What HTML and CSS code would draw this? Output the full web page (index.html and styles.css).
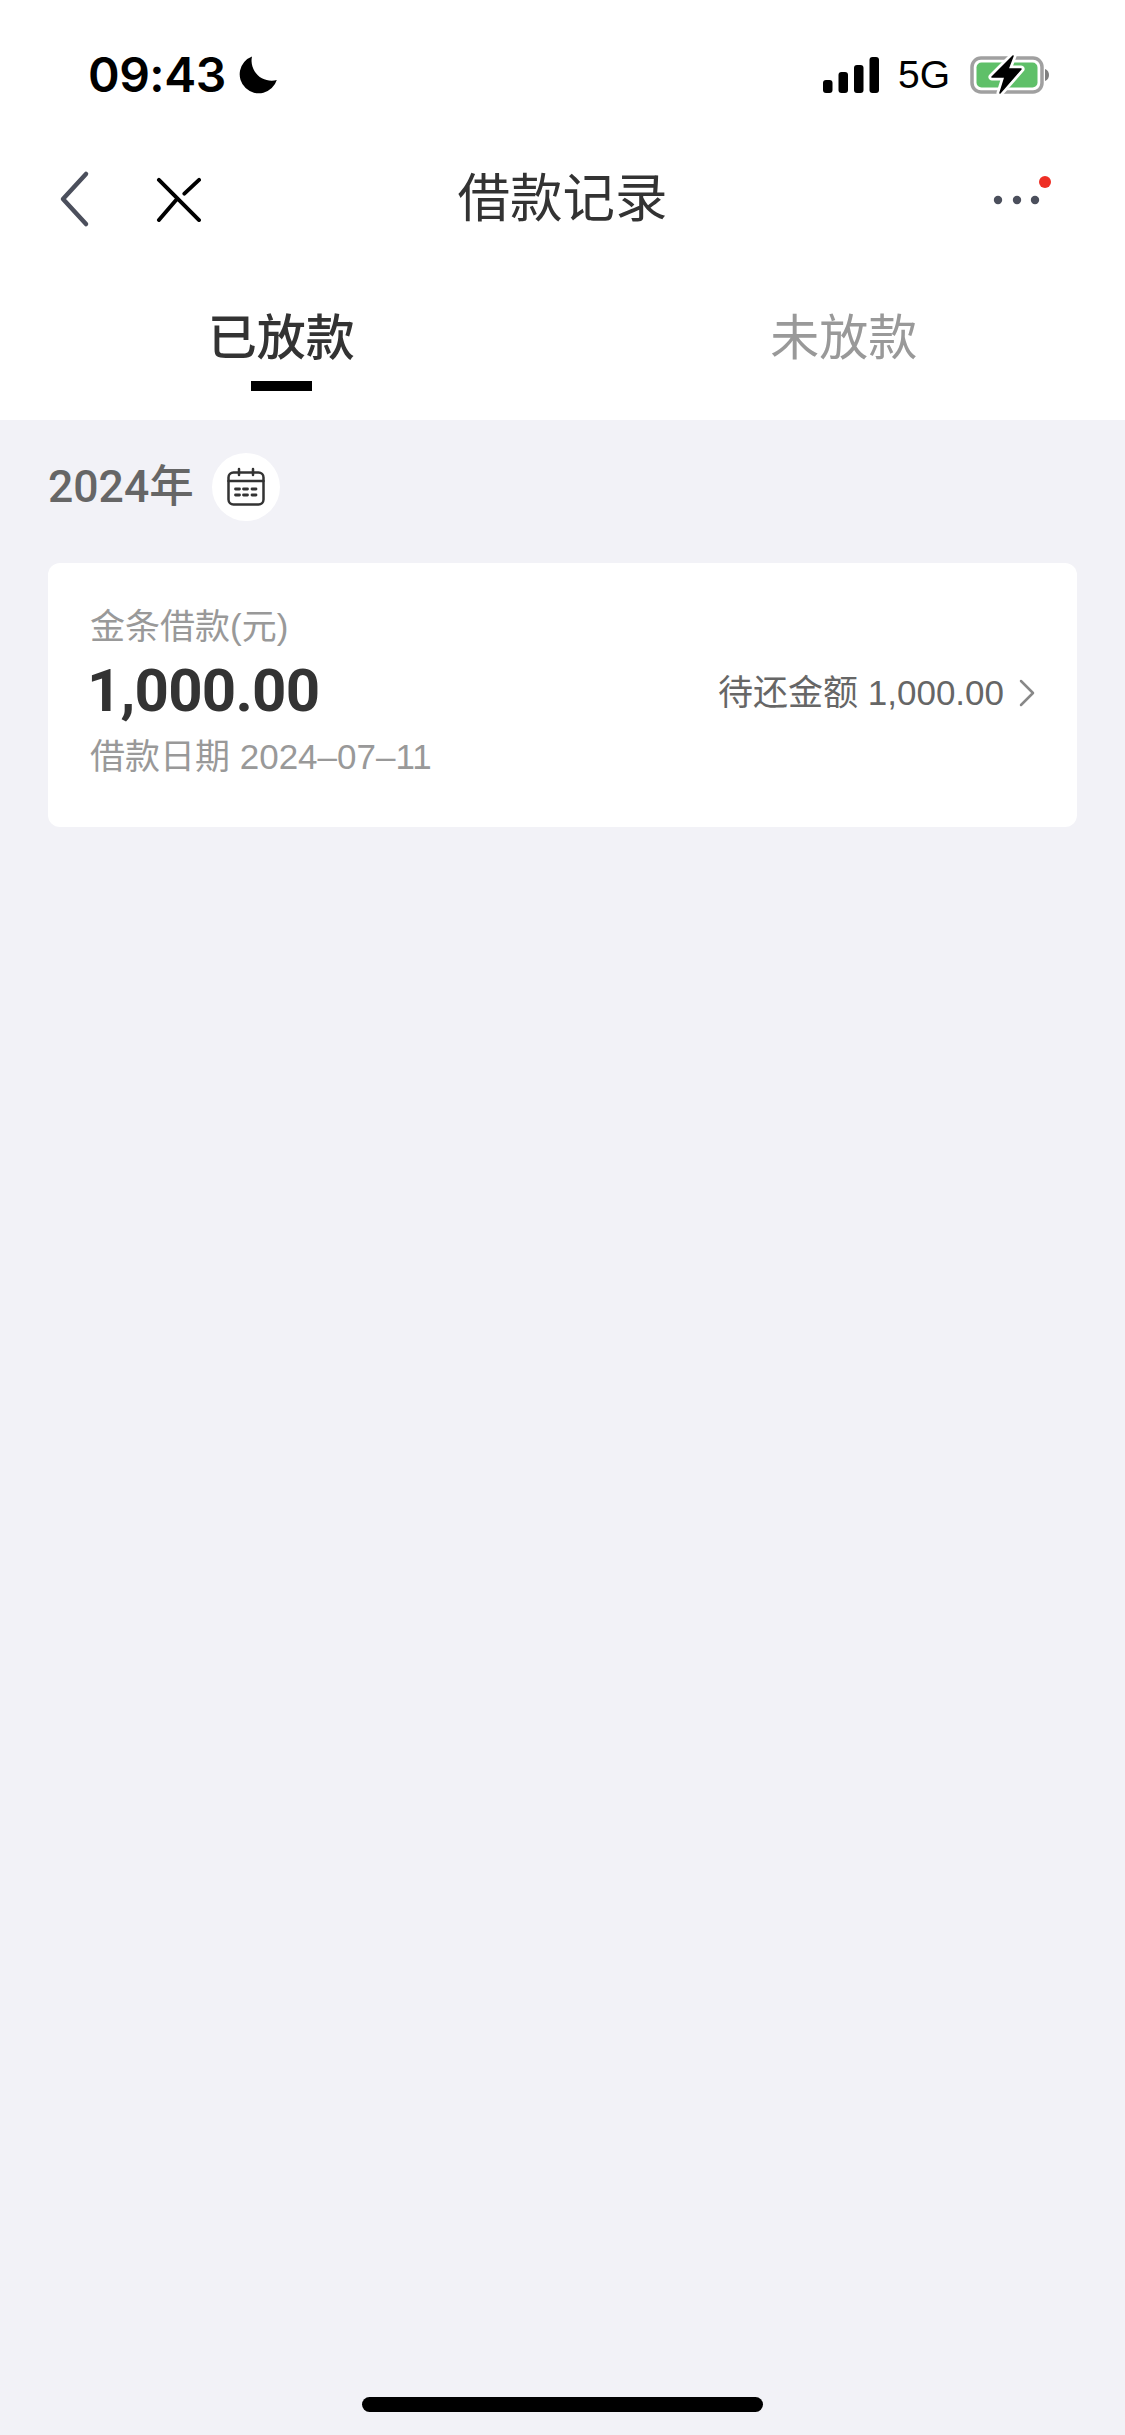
FILE: index.html
```html
<!DOCTYPE html>
<html lang="zh-CN">
<head>
<meta charset="utf-8">
<title>借款记录</title>
<link rel="stylesheet" href="styles.css">
</head>
<body>
<div class="page">
  <header class="top">
    <div class="status">
      <div class="status-left">
        <span class="time">09:43</span>
        <svg class="moon" viewBox="0 0 38 38"><path d="M13 .5A19 19 0 1 0 37.8 24 20 20 0 0 1 13 .5Z" fill="#000"/></svg>
      </div>
      <div class="status-right">
        <svg class="signal" viewBox="0 0 56 36"><rect x="0" y="23" width="9.500" height="13" rx="3"/><rect x="15.500" y="15" width="9.500" height="21" rx="3"/><rect x="31" y="8" width="9.500" height="28" rx="3"/><rect x="46.500" y="0" width="9.500" height="36" rx="3"/></svg>
        <span class="net">5G</span>
        <svg class="battery" viewBox="0 0 90 50"><rect x="7" y="8" width="70" height="34" rx="9" fill="none" stroke="#a0a0a0" stroke-width="3.500"/><rect x="11.500" y="12.500" width="61" height="25" rx="5" fill="#5fc069"/><path d="M80 19c3 1 4 3.500 4 6s-1 5-4 6Z" fill="#808080"/><path class="bolt-halo" d="M48 6 27 27h13l-5 16 21-24H43Z"/><path class="bolt" d="M48 6 27 27h13l-5 16 21-24H43Z"/></svg>
      </div>
    </div>
    <nav class="nav">
      <div class="nav-left">
        <svg class="back" viewBox="0 0 32 58"><path d="M27 4 4 29l23 25"/></svg>
        <svg class="close" viewBox="0 0 48 46"><path d="M4 3l41 41M45 3 30 17M22 23 4 44"/></svg>
      </div>
      <h1 class="title">借款记录</h1>
      <div class="nav-right">
        <svg class="more" viewBox="0 0 62 34"><circle cx="5" cy="26" r="4.200" fill="#4b4f5c"/><circle cx="24" cy="26" r="4.200" fill="#4b4f5c"/><circle cx="42" cy="26" r="4.200" fill="#4b4f5c"/><circle cx="52" cy="8" r="6" fill="#ee2e24"/></svg>
      </div>
    </nav>
    <div class="tabs">
      <div class="tab active"><span class="tab-label">已放款</span><i class="tab-bar"></i></div>
      <div class="tab"><span class="tab-label">未放款</span><i class="tab-bar"></i></div>
    </div>
  </header>
  <main class="main">
    <div class="year-row">
      <span class="year">2024年</span>
      <span class="cal">
        <svg viewBox="0 0 68 68" width="68" height="68"><rect x="16.500" y="19.500" width="35" height="32" rx="5"/><path d="M16.500 28h35M27 16v6M41 16v6"/><path class="cal-dots" d="M23.500 36h4M31.500 36h4M40 36h4M23.500 42h4M31.500 42h4M40 42h4"/></svg>
      </span>
    </div>
    <article class="card">
      <div class="card-left">
        <div class="label">金条借款(元)</div>
        <div class="amount">1,000.00</div>
        <div class="date">借款日期 2024–07–11</div>
      </div>
      <div class="card-right">
        <span class="due">待还金额 1,000.00</span>
        <svg class="chev" viewBox="0 0 16 28"><path d="M2 2l12 12L2 26"/></svg>
      </div>
    </article>
  </main>
  <div class="home"><i class="home-bar"></i></div>
</div>
</body>
</html>
```
FILE: styles.css
```css
* { box-sizing: border-box; margin: 0; padding: 0; }
html, body { width: 1125px; height: 2435px; overflow: hidden; }
body { font-family: "Liberation Sans", "Noto Sans CJK SC", sans-serif; background: #f2f2f7; color: #333; }
.page { display: flex; flex-direction: column; height: 2435px; }
.top { background: #fff; }
.status { height: 150px; padding: 0 70px 0 88px; display: flex; justify-content: space-between; align-items: center; }
.status-left { display: flex; align-items: center; gap: 13px; }
.time { font-family: Inter, sans-serif; font-size: 48px; font-weight: 600; line-height: 50px; color: #000; letter-spacing: -.5px; }
.moon { width: 38px; height: 38px; }
.status-right { display: flex; align-items: center; }
.signal { width: 56px; height: 36px; fill: #000; }
.net { font-size: 39px; line-height: 44px; color: #000; margin-left: 19px; }
.battery { width: 90px; height: 50px; margin-left: 15px; }
.bolt-halo { fill: #fff; stroke: #fff; stroke-width: 7; stroke-linejoin: round; }
.bolt { fill: #000; stroke: #000; stroke-width: 1.500; stroke-linejoin: round; }
.nav { height: 98px; display: grid; grid-template-columns: 1fr auto 1fr; align-items: center; padding: 0 59px; }
.nav-left { display: flex; align-items: center; gap: 64px; }
.nav-right { display: flex; justify-content: flex-end; }
.back { width: 32px; height: 58px; fill: none; stroke: #4b4f5c; stroke-width: 4.500; stroke-linecap: round; stroke-linejoin: round; }
.close { width: 47px; height: 45px; fill: none; stroke: #000; stroke-width: 4; stroke-linecap: round; }
.more { width: 62px; height: 34px; margin: -16px 11px 0 0; }
.title { font-size: 52.500px; font-weight: 400; line-height: 70px; color: #333; }
.tabs { display: grid; grid-template-columns: 1fr 1fr; padding-top: 57px; }
.tab { display: flex; flex-direction: column; align-items: center; }
.tab-label { font-size: 49px; line-height: 66px; color: #999; }
.tab-bar { width: 61px; height: 10px; margin: 10px 0 29px; background: transparent; }
.tab.active .tab-label { color: #333; font-weight: 500; }
.tab.active .tab-bar { background: #000; }
.main { flex: 1; padding: 33px 48px 0; }
.year-row { display: flex; align-items: center; gap: 18px; }
.year { font-family: Roboto, "Noto Sans CJK SC", sans-serif; font-size: 44.500px; font-weight: 500; line-height: 68px; color: #666; }
.cal { width: 68px; height: 68px; border-radius: 50%; background: #fff; display: block; }
.cal svg { display: block; fill: none; stroke: #333; stroke-width: 2.500; stroke-linecap: round; }
.cal .cal-dots { stroke-width: 2.800; }
.card { margin-top: 42px; height: 264px; background: #fff; border-radius: 12px; padding: 37px 42px 41px; display: flex; justify-content: space-between; align-items: center; }
.label { font-size: 35px; line-height: 54px; color: #999; }
.amount { font-family: Roboto, sans-serif; font-size: 60px; font-weight: 700; line-height: 74px; color: #333; letter-spacing: -.8px; margin-left: -3px; }
.date { font-size: 35px; line-height: 58px; color: #999; }
.card-right { display: flex; align-items: center; gap: 15px; }
.due { font-size: 35px; line-height: 54px; color: #666; }
.chev { width: 16px; height: 28px; fill: none; stroke: #888; stroke-width: 2.500; stroke-linecap: round; stroke-linejoin: round; }
.home { height: 38px; display: flex; justify-content: center; }
.home-bar { width: 401px; height: 15px; border-radius: 8px; background: #000; }
```
